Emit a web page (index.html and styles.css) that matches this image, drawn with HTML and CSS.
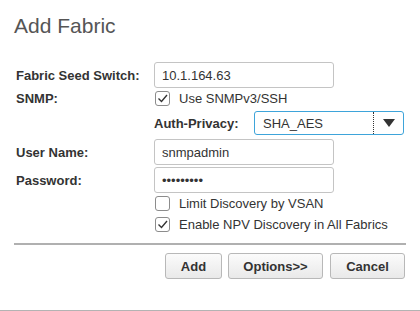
FILE: index.html
```html
<!DOCTYPE html>
<html lang="en">

<head>
    <meta charset="UTF-8">
    <title>Add Fabric</title>
    <link rel="stylesheet" href="styles.css">
</head>

<body>
    <div class="dialog">
        <h1 class="dialogTitle">Add Fabric</h1>

        <div class="fabricForm">
            <div class="fieldLabel row1">Fabric Seed Switch:</div>
            <div class="fieldCell row1"><input class="textField" type="text" value="10.1.164.63" readonly></div>

            <div class="fieldLabel row2">SNMP:</div>
            <div class="fieldCell row2">
                <label class="checkLine">
                    <span class="checkBox">
                        <svg width="13" height="13" viewBox="0 0 13 13"><path d="M2.5 6.5 L5.5 9.5 L11 3" fill="none" stroke="#333" stroke-width="1.4"/></svg>
                    </span>
                    Use SNMPv3/SSH
                </label>
            </div>

            <div class="fieldCell span2 row3">
                <div class="authRow">
                    <span class="authLabel">Auth-Privacy:</span>
                    <div class="selectBox">
                        <span class="selectValue">SHA_AES</span>
                        <span class="selectArrow"><span class="triangle"></span></span>
                    </div>
                </div>
            </div>

            <div class="fieldLabel row4">User Name:</div>
            <div class="fieldCell row4"><input class="textField" type="text" value="snmpadmin" readonly></div>

            <div class="fieldLabel row5">Password:</div>
            <div class="fieldCell row5"><input class="textField pwd" type="text" value="•••••••••" readonly></div>

            <div class="fieldCell span2 row6">
                <label class="checkLine">
                    <span class="checkBox"></span>
                    Limit Discovery by VSAN
                </label>
            </div>

            <div class="fieldCell span2 row7">
                <label class="checkLine">
                    <span class="checkBox">
                        <svg width="13" height="13" viewBox="0 0 13 13"><path d="M2.5 6.5 L5.5 9.5 L11 3" fill="none" stroke="#333" stroke-width="1.4"/></svg>
                    </span>
                    Enable NPV Discovery in All Fabrics
                </label>
            </div>
        </div>

        <div class="divider"></div>

        <div class="buttonBar">
            <button class="dlgBttn bttnAdd">Add</button>
            <button class="dlgBttn bttnOptions">Options&gt;&gt;</button>
            <button class="dlgBttn bttnCancel">Cancel</button>
        </div>
    </div>
</body>

</html>
```

FILE: styles.css
```css
body {
    margin: 0;
    background-color: #ffffff;
    font-family: "Liberation Sans", Arial, sans-serif;
    color: #333333;
}

.dialog {
    height: 310px;
    border-bottom: 1px solid #b3b3b3;
    box-sizing: content-box;
}

.dialogTitle {
    margin: 0;
    padding: 14px 0 0 14px;
    font-size: 21px;
    line-height: 24px;
    font-weight: normal;
    color: #555555;
}

.fabricForm {
    display: grid;
    grid-template-columns: 138px 1fr;
    grid-template-rows: 26px 20px 30px 28px 28px 18px 24px;
    margin-top: 24px;
    padding-left: 16px;
}

.fieldLabel {
    display: flex;
    align-items: center;
    font-size: 13px;
    font-weight: bold;
}

.fieldCell {
    display: flex;
    align-items: center;
}

.span2 {
    grid-column: 2;
}

.textField {
    width: 180px;
    height: 26px;
    box-sizing: border-box;
    border: 1px solid #c4c4c4;
    border-radius: 3px;
    padding: 0 0 0 7px;
    font-family: "Liberation Sans", Arial, sans-serif;
    font-size: 13px;
    color: #333333;
    outline: none;
}

.pwd {
    letter-spacing: 0;
}

.checkLine {
    display: flex;
    align-items: center;
    gap: 9px;
    margin-left: 1px;
    font-size: 13px;
}

.checkBox {
    width: 15px;
    height: 15px;
    box-sizing: border-box;
    border: 1px solid #8c8c8c;
    border-radius: 3px;
    background-color: #ffffff;
    display: flex;
    align-items: center;
    justify-content: center;
}

.authRow {
    display: flex;
    align-items: center;
}

.authLabel {
    width: 100px;
    font-size: 13px;
    font-weight: bold;
}

.selectBox {
    width: 150px;
    height: 24px;
    box-sizing: border-box;
    border: 1px solid #3ea4da;
    border-radius: 3px;
    display: flex;
    align-items: stretch;
}

.selectValue {
    flex: 1;
    display: flex;
    align-items: center;
    padding-left: 8px;
    font-size: 13px;
}

.selectArrow {
    width: 29px;
    border-left: 1px dotted #333333;
    display: flex;
    align-items: center;
    justify-content: center;
}

.triangle {
    width: 0;
    height: 0;
    border-left: 6px solid transparent;
    border-right: 6px solid transparent;
    border-top: 8px solid #333333;
}

.divider {
    margin: 7px 14px 0 14px;
    height: 2px;
    background-color: #b0b0b0;
}

.buttonBar {
    display: flex;
    justify-content: flex-end;
    gap: 6px;
    margin-top: 8px;
    padding-right: 15px;
}

.dlgBttn {
    height: 26px;
    box-sizing: border-box;
    border: 1px solid #b8b8b8;
    border-radius: 3px;
    background: linear-gradient(#fbfbfb, #e9e9e9);
    font-family: "Liberation Sans", Arial, sans-serif;
    font-size: 13px;
    font-weight: bold;
    color: #333333;
    padding: 0;
}

.bttnAdd {
    width: 57px;
}

.bttnOptions {
    width: 95px;
}

.bttnCancel {
    width: 75px;
    margin-left: 1px;
}
```
